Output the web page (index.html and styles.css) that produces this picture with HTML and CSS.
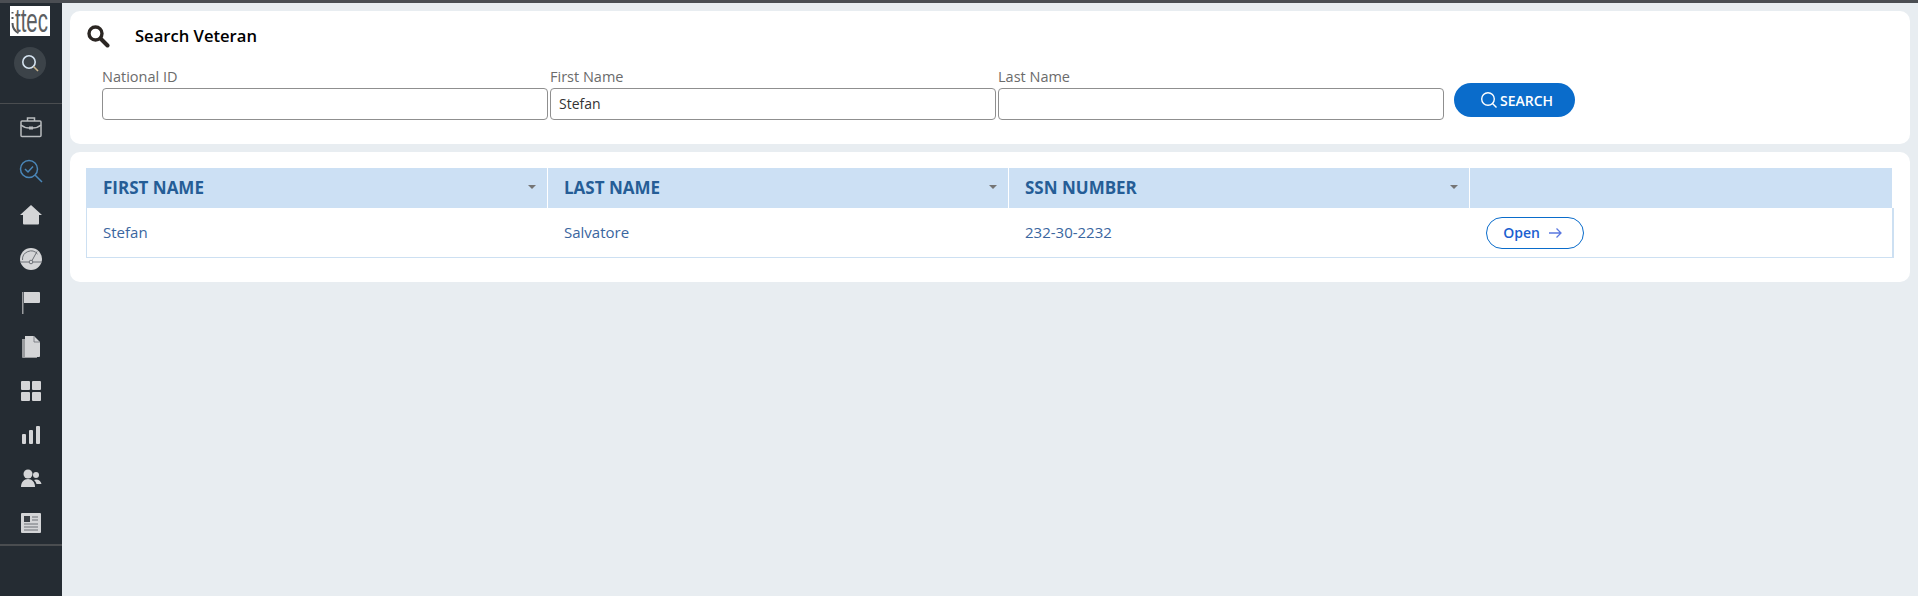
FILE: index.html
```html
<!DOCTYPE html>
<html lang="en">
<head>
  <meta charset="UTF-8" />
  <title>Search Veteran</title>
  <link rel="stylesheet" href="styles.css">
</head>
<body>
  <div class="topline"></div>
  <div class="layout">
    <aside class="sidebar">
      <div class="logo">
        <svg class="logo-arc" width="10" height="28" viewBox="0 0 10 28" fill="none" stroke="#55585b"><path d="M2.500 4v1.500M2.500 9v2M2.500 15c0 4 2 8 6 10" stroke-width="2"/></svg>
        <span class="logo-text">ttec</span>
      </div>
      <div class="side-search">
        <svg width="20" height="20" viewBox="0 0 20 20" fill="none"><circle cx="9" cy="9" r="6.200" stroke="#d5e3f0" stroke-width="1.600"/><path d="M13.500 13.500l4.500 4.500" stroke="#c9b48c" stroke-width="1.600"/></svg>
      </div>
      <div class="side-list">
        <div class="side-item">
          <svg width="24" height="22" viewBox="0 0 24 22" fill="none" stroke="#b9bcbf" stroke-width="1.500"><rect x="2" y="5" width="20" height="15.500" rx="1"/><path d="M8.500 5V2h7v3M2 9c3 2.500 6 3 8.500 3h3c2.500 0 5.500-.500 8.500-3"/><rect x="10.500" y="11" width="3" height="2" fill="#b9bcbf" stroke-width="1"/></svg>
        </div>
        <div class="side-item">
          <svg width="24" height="24" viewBox="0 0 24 24" fill="none" stroke="#4a86b8" stroke-width="1.500"><circle cx="10" cy="10" r="8.500"/><path d="M16 16l7 7M6 10l3 3 5-5.500"/></svg>
        </div>
        <div class="side-item">
          <svg width="24" height="22" viewBox="0 0 24 22" fill="#d4d5d7"><path d="M12 1L1 11h3v8.500a1 1 0 0 0 1 1h14a1 1 0 0 0 1-1V11h3z"/></svg>
        </div>
        <div class="side-item">
          <svg width="24" height="24" viewBox="0 0 24 24"><circle cx="12" cy="12" r="11" fill="#d4d5d7"/><path d="M3.500 13a8.500 8.500 0 0 1 15-6M1 15h9M14 15h9" fill="none" stroke="#6c7076" stroke-width="1"/><path d="M12.800 14L18 4.500" stroke="#6c7076" stroke-width="1"/><circle cx="12" cy="15" r="1.800" fill="#d4d5d7" stroke="#6c7076"/></svg>
        </div>
        <div class="side-item">
          <svg width="20" height="24" viewBox="0 0 20 24" fill="#d4d5d7"><rect x="1" y="1" width="1.500" height="22" fill="#9a9c9f"/><path d="M3 1h15a1 1 0 0 1 1 1v9a1 1 0 0 1-1 1H3z"/></svg>
        </div>
        <div class="side-item">
          <svg width="20" height="24" viewBox="0 0 20 24"><path d="M1 4h3v17h12v2H2a1 1 0 0 1-1-1z" fill="#9a9c9f"/><path d="M4 1h9l6 6v14a1 1 0 0 1-1 1H4z" fill="#d4d5d7"/><path d="M13 1v6h6" fill="none" stroke="#6c7076" stroke-width=".8"/></svg>
        </div>
        <div class="side-item">
          <svg width="22" height="22" viewBox="0 0 22 22" fill="#d4d5d7"><rect x="1" y="1" width="9" height="9" rx="1"/><rect x="12" y="1" width="9" height="9" rx="1"/><rect x="1" y="12" width="9" height="9" rx="1"/><rect x="12" y="12" width="9" height="9" rx="1"/></svg>
        </div>
        <div class="side-item">
          <svg width="20" height="20" viewBox="0 0 20 20" fill="#d4d5d7"><rect x="1" y="9" width="4" height="10" rx="1"/><rect x="8" y="5" width="4" height="14" rx="1"/><rect x="15" y="1" width="4" height="18" rx="1"/></svg>
        </div>
        <div class="side-item">
          <svg width="22" height="20" viewBox="0 0 22 20" fill="#d4d5d7"><circle cx="8" cy="5" r="4.500"/><path d="M1 18c0-5 3-8 7-8s7 3 7 8z"/><circle cx="16" cy="6" r="3"/><path d="M16 10.500c3 0 5 2 5.500 4.500h-5c-.5-2-1.500-3-2.500-4z"/></svg>
        </div>
        <div class="side-item">
          <svg width="22" height="22" viewBox="0 0 22 22"><rect x="1" y="1" width="20" height="20" rx="1" fill="#d4d5d7"/><rect x="4" y="4" width="6" height="6" fill="#3a3f45"/><path d="M12 5h6M12 8h6M4 12h14M4 15h14M4 18h14" stroke="#6c7076"/></svg>
        </div>
      </div>
    </aside>

    <main class="content">
      <section class="card search-card">
        <div class="card-title">
          <svg width="24" height="24" viewBox="0 0 24 24" fill="none"><circle cx="9.500" cy="9.500" r="6.500" stroke="#2b2623" stroke-width="3.400"/><path d="M15 15l6.500 6.500" stroke="#2b2623" stroke-width="4" stroke-linecap="round"/></svg>
          <h1>Search Veteran</h1>
        </div>
        <form class="search-form">
          <label class="field">National ID<input type="text"></label>
          <label class="field">First Name<input type="text" value="Stefan"></label>
          <label class="field">Last Name<input type="text"></label>
          <button type="button" class="search-btn">
            <svg width="18" height="18" viewBox="0 0 18 18" fill="none" stroke="#fff" stroke-width="1.400"><circle cx="8" cy="8" r="6.300"/><path d="M12.500 12.500l4 4"/></svg>
            SEARCH
          </button>
        </form>
      </section>

      <section class="card table-card">
        <table class="results">
          <thead>
            <tr>
              <th><span class="th-text">FIRST NAME</span><span class="sort"></span></th>
              <th><span class="th-text">LAST NAME</span><span class="sort"></span></th>
              <th><span class="th-text">SSN NUMBER</span><span class="sort"></span></th>
              <th></th>
            </tr>
          </thead>
          <tbody>
            <tr>
              <td class="text-cell">Stefan</td>
              <td class="text-cell">Salvatore</td>
              <td class="text-cell">232-30-2232</td>
              <td>
                <a class="open-btn" href="#">Open
                  <svg width="15" height="12" viewBox="0 0 15 12" fill="none" stroke="#5a78e0" stroke-width="1.300"><path d="M1 6h12M8.500 1.500L13 6l-4.500 4.500"/></svg>
                </a>
              </td>
            </tr>
          </tbody>
        </table>
      </section>
    </main>
  </div>
</body>
</html>
```

FILE: styles.css
```css
* { box-sizing: border-box; }
html, body {
  margin: 0;
  padding: 0;
  height: 100%;
  overflow: hidden;
}
body {
  font-family: 'Open Sans', sans-serif;
  background: #e8edf1;
  color: #333;
}
.topline {
  height: 3px;
  background: #4b4e53;
}
.layout {
  display: flex;
  height: 593px;
}
.sidebar {
  width: 62px;
  flex: none;
  background: #252c33;
  padding-top: 3px;
}
.logo {
  position: relative;
  width: 40px;
  height: 30px;
  margin-left: 10px;
  background: #fff;
}
.logo-arc {
  position: absolute;
  left: 0;
  top: 2px;
}
.logo-text {
  display: block;
  width: 36px;
  margin-left: 5px;
  color: #5c5f62;
  font-family: 'Liberation Sans', sans-serif;
  font-size: 33px;
  line-height: 30px;
  transform: scaleX(0.62);
  transform-origin: left center;
}
.side-search {
  width: 32px;
  height: 32px;
  margin: 11px 0 0 14px;
  border-radius: 50%;
  background: #3c4349;
  display: flex;
  align-items: center;
  justify-content: center;
}
.side-list {
  margin-top: 24px;
  padding-top: 1px;
  height: 443px;
  border-top: 1px solid #4a4d50;
  border-bottom: 2px solid #4a4d50;
}
.side-item {
  height: 44px;
  display: flex;
  align-items: center;
  justify-content: center;
}
.content {
  flex: 1;
  padding: 8px 8px 0;
}
.card {
  background: #fff;
  border-radius: 10px;
}
.search-card {
  height: 133px;
  padding: 13px 16px 0;
}
.card-title {
  display: flex;
  align-items: center;
  height: 24px;
}
.card-title h1 {
  margin: 0 0 0 25px;
  padding-bottom: 2px;
  font-size: 16.600px;
  font-weight: 600;
  color: #000;
}
.search-form {
  display: flex;
  align-items: flex-end;
  margin-top: 20px;
  padding-left: 16px;
}
.field {
  display: flex;
  flex-direction: column;
  width: 448px;
  font-size: 14.500px;
  line-height: 18px;
  color: #6b6b6b;
}
.field input {
  width: 446px;
  height: 32px;
  margin-top: 2px;
  border: 1px solid #8f8f8f;
  border-radius: 4px;
  padding: 0 8px 2px;
  font-family: inherit;
  font-size: 14px;
  color: #333;
}
.search-btn {
  width: 121px;
  height: 34px;
  margin: 0 0 3px 8px;
  padding: 0 0 0 4px;
  border: none;
  border-radius: 17px;
  background: #0a6ccb;
  color: #fff;
  font-family: inherit;
  font-size: 14px;
  font-weight: 600;
  display: flex;
  align-items: center;
  justify-content: center;
  gap: 2px;
}
.table-card {
  height: 130px;
  margin-top: 8px;
  padding: 16px;
}
.results {
  width: 1808px;
  height: 90px;
  border-collapse: separate;
  border-spacing: 0;
  table-layout: fixed;
}
.results th {
  position: relative;
  width: 461px;
  height: 40px;
  padding: 0 16px 2px;
  background: #cce0f4;
  border-right: 1px solid #fff;
  text-align: left;
  font-size: 17px;
  font-weight: 700;
  color: #255d96;
}
.results th:first-child {
  width: 462px;
  padding-left: 17px;
}
.results th:last-child {
  width: auto;
  border-right: 2px solid #fff;
}
.sort {
  position: absolute;
  right: 11px;
  top: 17px;
  border-left: 4px solid transparent;
  border-right: 4px solid transparent;
  border-top: 4px solid #757575;
}
.results td {
  padding: 0 16px;
  font-size: 15px;
  color: #3a66a0;
  border-bottom: 1px solid #cde0f2;
}
.results td.text-cell {
  padding-bottom: 2px;
}
.results td:first-child {
  border-left: 1px solid #cde0f2;
}
.results td:last-child {
  border-right: 2px solid #cde0f2;
}
.open-btn {
  display: inline-flex;
  align-items: center;
  justify-content: center;
  gap: 8px;
  width: 98px;
  height: 32px;
  padding-right: 4px;
  border: 1px solid #0a6ccb;
  border-radius: 16px;
  color: #1b5fd0;
  font-weight: 600;
  font-size: 14px;
  text-decoration: none;
}
```
